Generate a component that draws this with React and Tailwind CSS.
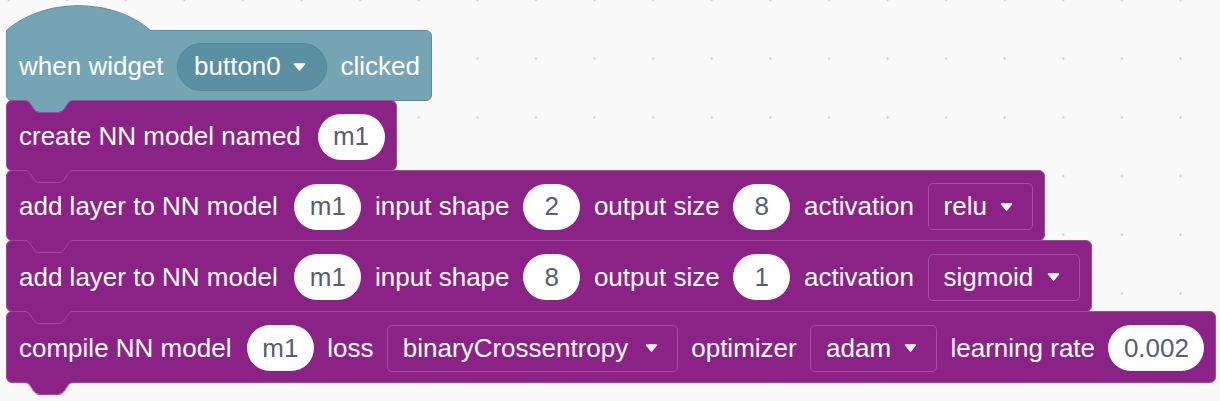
import React from "react";

const PURPLE = "#8b2387";
const PURPLE_EDGE = "#a5479f";
const TEAL = "#75a5b5";
const TEAL_EDGE = "#5d8c9c";

// notch / tab outline, Blockly zelos style
const NOTCH_FILL = "M0,0 C3,0 4,1 6,3 L10,9 C11.5,11 13,12 16,12 H34 C37,12 38.5,11 40,9 L44,3 C46,1 47,0 50,0 Z";
const NOTCH_LINE = "M0,0.5 C3,0.5 4,1.5 6,3.5 L10,9.5 C11.5,11.5 13,12.5 16,12.5 H34 C37,12.5 38.5,11.5 40,9.5 L44,3.5 C46,1.5 47,0.5 50,0.5";

const Notch = ({ fill, stroke, bottom }) => (
  <svg
    className={`absolute left-[17px] overflow-visible ${bottom ? "top-full" : "-top-px"}`}
    width="50"
    height="14"
  >
    <path d={NOTCH_FILL} fill={fill} />
    <path d={NOTCH_LINE} fill="none" stroke={stroke} strokeWidth="1" />
  </svg>
);

const Arrow = () => (
  <svg width="13" height="8" viewBox="0 0 13 8" className="shrink-0">
    <path d="M1.5,1 H11.5 L6.5,7 Z" fill="#fff" stroke="#fff" strokeWidth="1.5" strokeLinejoin="round" />
  </svg>
);

const Label = ({ children }) => <span className="whitespace-nowrap text-white">{children}</span>;

const Pill = ({ children, w }) => (
  <span className={`flex h-[46px] shrink-0 items-center justify-center rounded-full bg-white text-[#575e75] ${w}`}>
    {children}
  </span>
);

const Drop = ({ children, w }) => (
  <span
    className={`flex h-[47px] shrink-0 items-center justify-between rounded-[5px] border border-[#a749a6] pl-[15px] pr-[19px] text-white ${w}`}
  >
    <span className="whitespace-nowrap">{children}</span>
    <Arrow />
  </span>
);

const Block = ({ children, h, gap = "gap-[13.7px]", notchFill, tab }) => (
  <div
    className={`relative -mt-px flex w-fit items-center rounded-[6px] border border-[#a5479f] bg-[#8b2387] pl-[12px] pr-[11px] pt-[2px] ${gap} ${h}`}
  >
    <Notch fill={notchFill} stroke={PURPLE_EDGE} />
    {children}
    {tab && <Notch fill={PURPLE} stroke={PURPLE_EDGE} bottom />}
  </div>
);

export default function App() {
  return (
    <div className="h-[401px] w-full overflow-hidden bg-[#f9f9f9] bg-[radial-gradient(circle,#cdcdcd_0.9px,transparent_1.4px)] bg-[size:58.6px_58.7px] bg-[position:-20.7px_-29.35px] font-['Liberation_Sans',Arial,sans-serif] text-[26px]">
      <div className="flex flex-col items-start pl-[6px] pt-[30px]">
        {/* hat block */}
        <div className="relative z-0 flex h-[71px] w-fit items-center gap-[13.5px] rounded-[6px] rounded-tl-none border border-[#5d8c9c] bg-[#75a5b5] pl-[12px] pr-[11px] pt-[2px]">
          <svg className="absolute -left-px -top-[27px] overflow-visible" width="146" height="28">
            <path d="M0.5,28 V26.5 C38,-6.5 107,-6.5 144.5,26.5 V28 Z" fill={TEAL} />
            <path d="M0.5,27 V26.5 C38,-6.5 107,-6.5 144.5,26.5" fill="none" stroke={TEAL_EDGE} strokeWidth="1" />
          </svg>
          <Label>when widget</Label>
          <span className="flex h-[48px] w-[150px] shrink-0 items-center justify-between rounded-full border border-[#52879a] bg-[#5b8fa2] pl-[16px] pr-[20px] text-white">
            <span>button0</span>
            <Arrow />
          </span>
          <Label>clicked</Label>
        </div>

        <Block h="h-[71px]" notchFill={TEAL}>
          <Label>create NN model named</Label>
          <Pill w="w-[67px] ml-[3px]">m1</Pill>
        </Block>

        <Block h="h-[71px]" notchFill={PURPLE}>
          <Label>add layer to NN model</Label>
          <Pill w="w-[67px] ml-[3px]">m1</Pill>
          <Label>input shape</Label>
          <Pill w="w-[57px]">2</Pill>
          <Label>output size</Label>
          <Pill w="w-[57px]">8</Pill>
          <Label>activation</Label>
          <Drop w="w-[105px]">relu</Drop>
        </Block>

        <Block h="h-[72px]" notchFill={PURPLE}>
          <Label>add layer to NN model</Label>
          <Pill w="w-[67px] ml-[3px]">m1</Pill>
          <Label>input shape</Label>
          <Pill w="w-[57px]">8</Pill>
          <Label>output size</Label>
          <Pill w="w-[57px]">1</Pill>
          <Label>activation</Label>
          <Drop w="w-[152px]">sigmoid</Drop>
        </Block>

        <Block h="h-[72px]" gap="gap-[13.4px]" notchFill={PURPLE} tab>
          <Label>compile NN model</Label>
          <Pill w="w-[67px] ml-[2px]">m1</Pill>
          <Label>loss</Label>
          <Drop w="w-[291px]">binaryCrossentropy</Drop>
          <Label>optimizer</Label>
          <Drop w="w-[127px]">adam</Drop>
          <Label>learning rate</Label>
          <Pill w="w-[96px]">0.002</Pill>
        </Block>
      </div>
    </div>
  );
}
